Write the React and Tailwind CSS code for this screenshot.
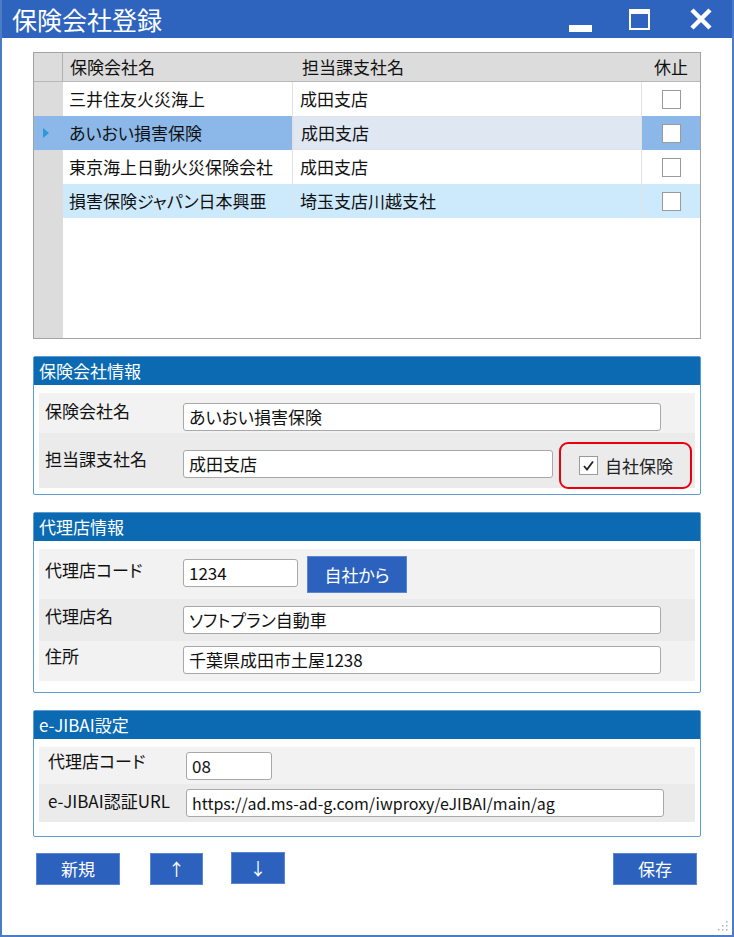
import React from 'react';

const font = { fontFamily: '"Noto Sans CJK JP", "Noto Sans", sans-serif', fontFeatureSettings: '"palt"' };

const rows = [
    { name: '三井住友火災海上', branch: '成田支店', kind: 'plain' },
    { name: 'あいおい損害保険', branch: '成田支店', kind: 'selected' },
    { name: '東京海上日動火災保険会社', branch: '成田支店', kind: 'plain' },
    { name: '損害保険ジャパン日本興亜', branch: '埼玉支店川越支社', kind: 'alt' },
];

const Box = ({ checked }) => (
    <div className="w-[19px] h-[19px] border border-[#9a9a9a] bg-white flex items-center justify-center">
        {checked && (
            <svg width="13" height="13" viewBox="0 0 13 13">
                <path d="M2 7 L5 10.5 L11 2.5" fill="none" stroke="#222" strokeWidth="1.8" />
            </svg>
        )}
    </div>
);

const Field = ({ value, w, size = 'text-[17px]' }) => (
    <div className={`${w} h-[28px] bg-white border border-[#a8a8a8] rounded-[3px] px-[5px] flex items-center ${size} text-[#111] whitespace-nowrap`}>
        {value}
    </div>
);

const Section = ({ title, children, className }) => (
    <div className={`mx-[31px] border border-[#5d9bd3] rounded-[2px] ${className}`}>
        <div className="h-[28px] bg-[#0b6ab2] text-white text-[17px] px-[5px] flex items-center">{title}</div>
        <div className="px-[5px] pt-[8px]">{children}</div>
    </div>
);

const Row = ({ label, bg, h, labelPad, children, lx = 'w-[144px] pl-[6px]' }) => (
    <div className={`flex ${bg} ${h}`}>
        <div className={`${lx} ${labelPad} text-[17px] text-[#111] shrink-0 whitespace-nowrap`}>{label}</div>
        <div className="flex-1 flex items-start">{children}</div>
    </div>
);

const Btn = ({ children, w, className = '' }) => (
    <div className={`${w} h-[32px] bg-[#2c62be] border border-[#5b87d0] text-white text-[17px] flex items-center justify-center ${className}`}>
        {children}
    </div>
);

export default function App() {
    return (
        <div style={font} className="w-[734px] h-[937px] bg-white border-x-2 border-b-2 border-[#4a7dc6] flex flex-col relative overflow-hidden">
            {/* title bar */}
            <div className="h-[38px] -mx-[2px] bg-[#2e63be] flex items-center pl-[12px] pr-[21px] shrink-0">
                <div className="text-white text-[25px] flex-1 leading-none">保険会社登録</div>
                <div className="flex items-center">
                    <div className="w-[23px] h-[7px] bg-white mt-[18px]" />
                    <div className="ml-[37px] w-[21px] h-[21px] border-[2.5px] border-white border-t-[5px]" />
                    <svg className="ml-[39px]" width="24" height="24" viewBox="0 0 24 24">
                        <path d="M3 3 L21 21 M21 3 L3 21" stroke="white" strokeWidth="4.5" />
                    </svg>
                </div>
            </div>

            {/* grid */}
            <div className="mt-[14px] mx-[31px] h-[287px] border border-[#a3a3a3] flex flex-col text-[17px] text-[#111]">
                <div className="h-[29px] bg-[#dcdcdc] border-b border-[#b8b8b8] flex shrink-0">
                    <div className="w-[29px] border-r border-[#b0b0b0]" />
                    <div className="w-[230px] pl-[7px] flex items-center">保険会社名</div>
                    <div className="w-[349px] pl-[9px] flex items-center">担当課支社名</div>
                    <div className="flex-1 flex items-center justify-center">休止</div>
                </div>
                <div className="flex flex-1">
                    <div className="w-[29px] bg-[#dcdcdc] flex flex-col">
                        {rows.map((r, i) => (
                            <div key={i} className={`h-[34px] flex items-center pl-[9px] ${r.kind === 'selected' ? 'bg-[#8bb8e8]' : ''}`}>
                                {r.kind === 'selected' && (
                                    <svg width="7" height="10" viewBox="0 0 7 10"><path d="M0 0 L6 5 L0 10 Z" fill="#2a9ad8" /></svg>
                                )}
                            </div>
                        ))}
                    </div>
                    <div className="flex-1 flex flex-col">
                        {rows.map((r, i) => {
                            const bg = r.kind === 'selected' ? 'bg-[#8bb8e8]' : r.kind === 'alt' ? 'bg-[#cdeafc]' : 'bg-white';
                            return (
                                <div key={i} className={`h-[34px] flex ${bg}`}>
                                    <div className="w-[230px] pl-[6px] flex items-center border-r border-[#e2e2e2] whitespace-nowrap">{r.name}</div>
                                    <div className={`w-[349px] pl-[7px] flex items-center border-r border-[#e2e2e2] ${r.kind === 'selected' ? 'bg-[#dfe7f2] border border-[#9cc3ec]' : ''}`}>{r.branch}</div>
                                    <div className="flex-1 flex items-center justify-center"><Box /></div>
                                </div>
                            );
                        })}
                        <div className="flex-1 bg-white" />
                    </div>
                </div>
            </div>

            {/* 保険会社情報 */}
            <Section title="保険会社情報" className="mt-[17px] h-[139px]">
                <Row label="保険会社名" bg="bg-[#f2f2f2]" h="h-[40px]" labelPad="pt-[5px]">
                    <div className="pt-[10px]"><Field value="あいおい損害保険" w="w-[478px]" /></div>
                </Row>
                <Row label="担当課支社名" bg="bg-[#ebebeb]" h="h-[55px]" labelPad="pt-[13px]">
                    <div className="pt-[17px]"><Field value="成田支店" w="w-[370px]" /></div>
                    <div className="ml-[6px] mt-[9px] w-[133px] h-[47px] border-2 border-[#e8000e] rounded-[9px] flex items-center pl-[18px] gap-[7px]">
                        <Box checked />
                        <span className="text-[17px] text-[#222]">自社保険</span>
                    </div>
                </Row>
            </Section>

            {/* 代理店情報 */}
            <Section title="代理店情報" className="mt-[17px] h-[181px]">
                <Row label="代理店コード" bg="bg-[#f2f2f2]" h="h-[50px]" labelPad="pt-[8px]">
                    <div className="pt-[10px]"><Field value="1234" w="w-[115px]" /></div>
                    <Btn w="w-[100px]" className="ml-[9px] mt-[7px] h-[37px]">自社から</Btn>
                </Row>
                <Row label="代理店名" bg="bg-[#ebebeb]" h="h-[42px]" labelPad="pt-[4px]">
                    <div className="pt-[7px]"><Field value="ソフトプラン自動車" w="w-[478px]" /></div>
                </Row>
                <Row label="住所" bg="bg-[#f2f2f2]" h="h-[40px]" labelPad="pt-[2px]">
                    <div className="pt-[5px]"><Field value="千葉県成田市土屋1238" w="w-[478px]" /></div>
                </Row>
            </Section>

            {/* e-JIBAI設定 */}
            <Section title="e-JIBAI設定" className="mt-[17px] h-[127px]">
                <Row label="代理店コード" bg="bg-[#f2f2f2]" h="h-[37px]" labelPad="pt-[1px]" lx="w-[147px] pl-[9px]">
                    <div className="pt-[5px]"><Field value="08" w="w-[86px]" /></div>
                </Row>
                <Row label="e-JIBAI認証URL" bg="bg-[#ebebeb]" h="h-[38px]" labelPad="pt-[4px]" lx="w-[147px] pl-[9px]">
                    <div className="pt-[5px]"><Field value="https://ad.ms-ad-g.com/iwproxy/eJIBAI/main/ag" w="w-[478px]" size="text-[16px]" /></div>
                </Row>
            </Section>

            {/* buttons */}
            <div className="mt-[16px] flex items-start px-[34px]">
                <Btn w="w-[84px]">新規</Btn>
                <Btn w="w-[53px]" className="ml-[30px]">↑</Btn>
                <Btn w="w-[54px]" className="ml-[28px] -mt-[1px]">↓</Btn>
                <div className="flex-1" />
                <Btn w="w-[84px]" className="mr-[1px]">保存</Btn>
            </div>

            {/* resize grip */}
            <svg className="absolute right-[3px] bottom-[3px]" width="12" height="12" viewBox="0 0 12 12">
                {[[10, 2], [10, 6], [6, 6], [10, 10], [6, 10], [2, 10]].map(([x, y], i) => (
                    <rect key={i} x={x - 1} y={y - 1} width="1.5" height="1.5" fill="#b0b0b0" />
                ))}
            </svg>
        </div>
    );
}
